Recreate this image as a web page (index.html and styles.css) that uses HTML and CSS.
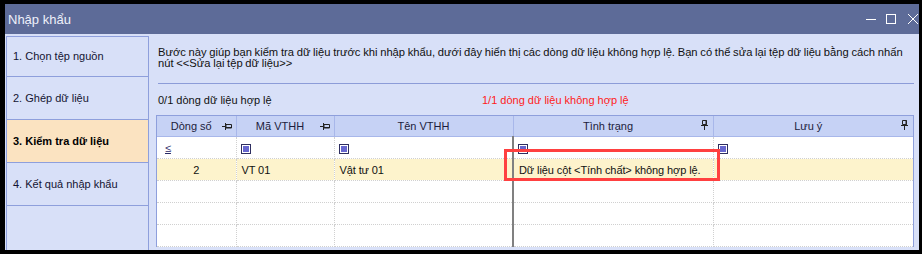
FILE: index.html
```html
<!DOCTYPE html>
<html lang="vi">
<head>
    <meta charset="UTF-8">
    <title>Nhập khẩu</title>
    <link rel="stylesheet" href="styles.css">
</head>
<body>
    <div class="window">
        <div class="titlebar">
            <span class="title">Nhập khẩu</span>
            <div class="controls">
                <svg width="10" height="10" viewBox="0 0 10 10"><path d="M0 5.5h10" stroke="#fff" stroke-width="1"/></svg>
                <svg width="10" height="10" viewBox="0 0 10 10"><rect x="0.5" y="0.5" width="9" height="9" fill="none" stroke="#fff" stroke-width="1"/></svg>
                <svg width="10" height="10" viewBox="0 0 10 10"><path d="M0 0L10 10M10 0L0 10" stroke="#fff" stroke-width="1"/></svg>
            </div>
        </div>

        <div class="content">
            <div class="steps">
                <div class="step first">1. Chọn tệp nguồn</div>
                <div class="step">2. Ghép dữ liệu</div>
                <div class="step active">3. Kiểm tra dữ liệu</div>
                <div class="step">4. Kết quả nhập khẩu</div>
                <div class="step empty"></div>
            </div>

            <div class="main">
                <p class="intro">Bước này giúp bạn kiểm tra dữ liệu trước khi nhập khẩu, dưới đây hiển thị các dòng dữ liệu không hợp lệ. Bạn có thể sửa lại tệp dữ liệu bằng cách nhấn nút &lt;&lt;Sửa lại tệp dữ liệu&gt;&gt;</p>
                <div class="separator"></div>

                <div class="summary">
                    <span class="valid">0/1 dòng dữ liệu hợp lệ</span>
                    <span class="invalid">1/1 dòng dữ liệu không hợp lệ</span>
                </div>

                <div class="grid-wrap">
                    <table class="grid">
                        <colgroup>
                            <col style="width: 79px">
                            <col style="width: 98px">
                            <col style="width: 179px">
                            <col style="width: 200px">
                            <col style="width: 200px">
                        </colgroup>
                        <thead>
                            <tr>
                                <th class="pinned">Dòng số
                                    <svg class="pin" width="10" height="7" viewBox="0 0 10 7"><path d="M0 3.5h3.5M3.5 0v7" stroke="#222" stroke-width="1"/><path d="M4 1.5h5.5v3.5H4z" fill="none" stroke="#222" stroke-width="1"/><path d="M4 4.5h6" stroke="#222" stroke-width="1"/></svg>
                                </th>
                                <th class="pinned">Mã VTHH
                                    <svg class="pin" width="10" height="7" viewBox="0 0 10 7"><path d="M0 3.5h3.5M3.5 0v7" stroke="#222" stroke-width="1"/><path d="M4 1.5h5.5v3.5H4z" fill="none" stroke="#222" stroke-width="1"/><path d="M4 4.5h6" stroke="#222" stroke-width="1"/></svg>
                                </th>
                                <th class="split">Tên VTHH</th>
                                <th class="pinned">Tình trạng
                                    <svg class="pin vpin" width="7" height="10" viewBox="0 0 7 10"><path d="M1.5 0.5h4v4h-4z" fill="none" stroke="#222" stroke-width="1"/><path d="M5 0v5M0 5.5h7M3.5 5.5V10" stroke="#222" stroke-width="1"/></svg>
                                </th>
                                <th class="pinned">Lưu ý
                                    <svg class="pin vpin" width="7" height="10" viewBox="0 0 7 10"><path d="M1.5 0.5h4v4h-4z" fill="none" stroke="#222" stroke-width="1"/><path d="M5 0v5M0 5.5h7M3.5 5.5V10" stroke="#222" stroke-width="1"/></svg>
                                </th>
                            </tr>
                        </thead>
                        <tbody>
                            <tr class="filter">
                                <td><span class="op">≤</span></td>
                                <td><span class="flt"></span></td>
                                <td class="split"><span class="flt"></span></td>
                                <td><span class="flt"></span></td>
                                <td><span class="flt"></span></td>
                            </tr>
                            <tr class="error-row">
                                <td class="num">2</td>
                                <td>VT 01</td>
                                <td class="split">Vật tư 01</td>
                                <td>Dữ liệu cột &lt;Tính chất&gt; không hợp lệ.</td>
                                <td></td>
                            </tr>
                            <tr><td></td><td></td><td class="split"></td><td></td><td></td></tr>
                            <tr><td></td><td></td><td class="split"></td><td></td><td></td></tr>
                            <tr><td></td><td></td><td class="split"></td><td></td><td></td></tr>
                        </tbody>
                    </table>
                    <div class="highlight"></div>
                </div>
            </div>
        </div>
    </div>
</body>
</html>
```

FILE: styles.css
```css
html, body {
    margin: 0;
    padding: 0;
    background: #000;
    height: 254px;
    overflow: hidden;
}

body {
    font-family: 'Liberation Sans', Arial, sans-serif;
    font-size: 11px;
    color: #111;
}

.window {
    margin: 4px 3px 0 5px;
    height: 246px;
    background: #d8e0f8;
    display: flex;
    flex-direction: column;
    overflow: hidden;
}

.titlebar {
    height: 30px;
    flex-shrink: 0;
    background: #5d6b98;
    display: flex;
    align-items: center;
    justify-content: space-between;
    padding: 0 1px 0 3px;
}

.title {
    color: #eef0fa;
    font-size: 13px;
}

.controls {
    display: flex;
    align-items: center;
    gap: 10px;
}

.controls svg:last-child {
    margin-left: 2px;
}

.content {
    flex: 1;
    display: flex;
    padding: 2px 0 0 1px;
    min-height: 0;
}

.steps {
    width: 141px;
    flex-shrink: 0;
    border: 1px solid #8e9fdc;
    border-bottom: none;
    display: flex;
    flex-direction: column;
}

.step {
    height: 42px;
    border-bottom: 1px solid #8e9fdc;
    display: flex;
    align-items: center;
    padding-left: 6px;
    color: #141432;
}

.step.first {
    height: 40px;
    padding-bottom: 2px;
    box-sizing: border-box;
}

.step.active {
    background: #fbe3c1;
    font-weight: bold;
    color: #000;
}

.step.empty {
    flex: 1;
    border-bottom: none;
}

.main {
    flex: 1;
    padding: 11px 5px 0 7px;
    min-width: 0;
}

.intro {
    margin: 0;
    padding: 0 0 0 2px;
    line-height: 11px;
    font-size: 11.2px;
    word-spacing: -0.4px;
    color: #111;
}

.separator {
    height: 1px;
    background: #8c9cd8;
    margin: 14px 0 0 2px;
}

.summary {
    display: flex;
    margin-top: 9px;
    padding-left: 2px;
    line-height: 14px;
}

.valid {
    width: 324px;
}

.invalid {
    color: #ff2020;
}

.grid-wrap {
    position: relative;
    margin-top: 8px;
    background: #fff;
    border-left: 1px solid #8e9fdc;
    border-top: 1px solid #8e9fdc;
    border-right: 1px solid #8e9fdc;
    width: 756px;
}

.grid {
    table-layout: fixed;
    border-collapse: collapse;
    width: 756px;
}

.grid th {
    height: 20px;
    padding: 0;
    background: #c6d2f5;
    font-weight: normal;
    color: #1c1c3c;
    border-right: 1px solid #a8b7ea;
    border-bottom: 1px solid #a8b7ea;
    text-align: center;
    position: relative;
}

.grid th.pinned {
    padding-right: 10px;
}

.grid th:last-child {
    border-right: none;
}

.pin {
    position: absolute;
    right: 4px;
    top: 7px;
}

.pin.vpin {
    right: 5px;
    top: 4px;
}

.grid td {
    height: 21px;
    padding: 0 0 0 5px;
    border-right: 1px dotted #d0d0d0;
    border-bottom: 1px dotted #d0d0d0;
    white-space: nowrap;
    overflow: hidden;
    color: #111;
    letter-spacing: -0.1px;
}

.grid td:last-child {
    border-right: none;
}

.grid td.split {
    border-right: 2px solid #808080;
}

.filter td {
    padding-left: 4px;
    vertical-align: middle;
}

.op {
    color: #2a2a66;
    text-decoration: underline;
    padding-left: 4px;
}

.flt {
    display: inline-block;
    width: 10px;
    height: 10px;
    box-sizing: border-box;
    border: 1px solid #2e2e60;
    background: #6767cf;
    box-shadow: inset 0 0 0 1px #fff;
    vertical-align: middle;
}

.error-row td {
    background: #fdf3cc;
}

.error-row td.num {
    text-align: center;
    padding-left: 0;
}

.highlight {
    position: absolute;
    left: 347px;
    top: 33px;
    width: 216px;
    height: 32px;
    box-sizing: border-box;
    border: 3px solid #ff4040;
}
```
